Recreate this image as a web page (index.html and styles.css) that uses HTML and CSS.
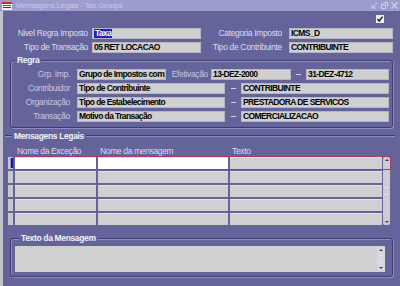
FILE: index.html
```html
<!DOCTYPE html>
<html>
  <head>
    <title>Mensagens Legais - Tax Groups</title>
    <link rel="stylesheet" href="styles.css">
  </head>

  <body>
    <div class="window">
      <div class="titlebar">
        <svg class="app-icon" width="10" height="8" viewBox="0 0 10 8">
          <rect x="0" y="0" width="10" height="8" fill="#f4f4f4"/>
          <rect x="0" y="0" width="10" height="2" fill="#c8302c"/>
          <rect x="1" y="3" width="8" height="1" fill="#c8302c"/>
          <rect x="1" y="5" width="8" height="1" fill="#404040"/>
        </svg>
        <span class="title">Mensagens Legais - Tax Groups</span>
        <div class="controls">
          <svg width="7" height="7" viewBox="0 0 7 7"><path d="M1 6 L6 1 M1 6 H5 M1 6 V3" stroke="#d2d2e6" fill="none"/></svg>
          <svg width="7" height="7" viewBox="0 0 7 7"><path d="M0.5 2.5 H4.5 V6.5 H0.5 Z M2.5 0.5 H6.5 V4.5" stroke="#d2d2e6" fill="none"/></svg>
          <svg width="7" height="7" viewBox="0 0 7 7"><path d="M0.5 0.5 L6.5 6.5 M6.5 0.5 L0.5 6.5" stroke="#d2d2e6" stroke-width="1.2"/></svg>
        </div>
      </div>

      <div class="content">
        <div class="check-row">
          <span class="check">
            <svg width="8" height="8" viewBox="0 0 8 8"><path d="M1.5 4 L3.2 6 L6.6 1.6" stroke="#202030" stroke-width="1.5" fill="none"/></svg>
          </span>
        </div>

        <div class="head">
          <span class="lbl">Nivel Regra Imposto</span>
          <span class="fld"><span class="sel">Taxa</span></span>
          <span class="lbl lbl-right">Categoria Imposto</span>
          <span class="fld">ICMS_D</span>
          <span class="lbl">Tipo de Transação</span>
          <span class="fld">05 RET LOCACAO</span>
          <span class="lbl lbl-right">Tipo de Contribuinte</span>
          <span class="fld">CONTRIBUINTE</span>
        </div>

        <fieldset class="group regra">
          <legend>Regra</legend>
          <div class="rrow">
            <span class="rlbl">Grp. Imp.</span>
            <span class="fld grp">Grupo de Impostos com</span>
            <span class="rlbl efet">Efetivação</span>
            <span class="fld date-from">13-DEZ-2000</span>
            <span class="dash"></span>
            <span class="fld date-to">31-DEZ-4712</span>
          </div>
          <div class="rrow">
            <span class="rlbl">Contribuidor</span>
            <span class="fld half">Tipo de Contribuinte</span>
            <span class="dash dash-wide"></span>
            <span class="fld half">CONTRIBUINTE</span>
          </div>
          <div class="rrow">
            <span class="rlbl">Organização</span>
            <span class="fld half">Tipo de Estabelecimento</span>
            <span class="dash dash-wide"></span>
            <span class="fld half">PRESTADORA DE SERVICOS</span>
          </div>
          <div class="rrow">
            <span class="rlbl">Transação</span>
            <span class="fld half">Motivo da Transação</span>
            <span class="dash dash-wide"></span>
            <span class="fld half">COMERCIALIZACAO</span>
          </div>
        </fieldset>

        <div class="sect-title"><span>Mensagens Legais</span></div>

        <div class="cols">
          <span></span>
          <span>Nome da Exceção</span>
          <span>Nome da mensagem</span>
          <span>Texto</span>
        </div>

        <div class="table">
          <div class="ind">
            <span class="ind-cell ind-current"><i></i></span>
            <span class="ind-cell"></span>
            <span class="ind-cell"></span>
            <span class="ind-cell"></span>
            <span class="ind-cell"></span>
          </div>
          <div class="rows">
            <div class="trow current-row"><span class="cell"></span><span class="cell"></span><span class="cell"></span></div>
            <div class="trow"><span class="cell"></span><span class="cell"></span><span class="cell"></span></div>
            <div class="trow"><span class="cell"></span><span class="cell"></span><span class="cell"></span></div>
            <div class="trow"><span class="cell"></span><span class="cell"></span><span class="cell"></span></div>
            <div class="trow"><span class="cell"></span><span class="cell"></span><span class="cell"></span></div>
          </div>
          <div class="vscroll">
            <span class="arrow up"></span>
            <span class="grip"></span>
            <span class="arrow down"></span>
          </div>
          <div class="current-box"></div>
        </div>

        <fieldset class="group texto">
          <legend>Texto da Mensagem</legend>
          <div class="textarea">
            <div class="vscroll vscroll-small">
              <span class="arrow up"></span>
              <span class="grip"></span>
              <span class="arrow down"></span>
            </div>
          </div>
        </fieldset>
      </div>
    </div>
  </body>
</html>
```

FILE: styles.css
```css
:root {
  --bg: #64649a;
  --field: #d0d0d0;
  --line-dark: #3c3c6c;
  --line-light: #8c8cc0;
  --font: "Liberation Sans", Arial, sans-serif;
}

body {
  margin: 0;
  background: var(--bg);
  font-family: var(--font);
  font-size: 8.5px;
  letter-spacing: -0.35px;
}

.window {
  width: 400px;
  height: 286px;
  overflow: hidden;
}

.titlebar {
  height: 11px;
  background: #9c9cce;
  display: flex;
  align-items: center;
  padding-left: 2px;
}
.app-icon {
  margin-right: 4px;
}
.title {
  color: #c8c8e6;
  font-size: 8px;
  letter-spacing: -0.3px;
  line-height: 11px;
}
.controls {
  margin-left: auto;
  display: flex;
  gap: 3px;
  padding-right: 2px;
}

.content {
  height: 275px;
  border-left: 3px solid #c2c2cc;
  display: flex;
  flex-direction: column;
}

.check-row {
  display: flex;
  justify-content: flex-end;
  padding: 4px 16px 0 0;
  margin-bottom: 5px;
}
.check {
  width: 8px;
  height: 8px;
  background: #f0f0f4;
  display: flex;
}

.head {
  display: grid;
  grid-template-columns: 89px 109px 88px 104px;
  grid-auto-rows: 11px;
  row-gap: 3px;
}
.lbl {
  color: #dcdcf0;
  text-align: right;
  padding-right: 4px;
  line-height: 11px;
  white-space: nowrap;
}
.lbl-right {
  padding-right: 7px;
}

.fld {
  box-sizing: border-box;
  height: 11px;
  background: var(--field);
  border: 1px solid #b4b4c2;
  color: #000;
  font-weight: bold;
  letter-spacing: -0.6px;
  line-height: 9px;
  padding-left: 1px;
  white-space: nowrap;
  overflow: hidden;
}
.sel {
  background: #2222b8;
  color: #fff;
  padding: 0 1px;
}

.group {
  margin: 2px 0 0 7px;
  width: 383px;
  box-sizing: border-box;
  border: 1px solid var(--line-dark);
  border-radius: 3px;
  box-shadow: 1px 1px 0 var(--line-light), inset 1px 1px 0 var(--line-light);
  padding: 0;
}
.group legend {
  color: #f2f2fc;
  font-weight: bold;
  line-height: 10px;
  padding: 0 2px;
  margin-left: 4px;
  background: var(--bg);
}

.regra {
  padding: 4px 0 5px 0;
  display: flex;
  flex-direction: column;
  gap: 3px;
}
.rrow {
  display: flex;
  height: 11px;
}
.rlbl {
  width: 66px;
  box-sizing: border-box;
  padding-right: 7px;
  text-align: right;
  color: #c6c6e2;
  line-height: 11px;
  white-space: nowrap;
}
.rlbl.efet {
  width: 45px;
  padding-right: 3px;
}
.grp { width: 89px; }
.date-from { width: 80px; }
.date-to { width: 83px; }
.half { width: 148px; }

.dash {
  width: 15px;
  display: flex;
  align-items: center;
  justify-content: center;
}
.dash::before {
  content: "";
  width: 5px;
  height: 1px;
  background: #d0d0ea;
}
.dash-wide {
  width: 16px;
}

.sect-title {
  display: flex;
  align-items: center;
  height: 10px;
  margin: 3px 5px 0 2px;
  color: #f2f2fc;
  font-weight: bold;
}
.sect-title::before,
.sect-title::after {
  content: "";
  height: 0;
  border-top: 1px solid var(--line-dark);
  border-bottom: 1px solid var(--line-light);
}
.sect-title::before {
  width: 7px;
}
.sect-title::after {
  flex: 1;
}
.sect-title span {
  padding: 0 2px;
}

.cols {
  display: grid;
  grid-template-columns: 7px 83px 132px 153px;
  margin: 5px 0 0 5px;
  height: 10px;
  color: #dcdcf0;
  line-height: 11px;
  overflow: hidden;
}
.cols span {
  padding-left: 2px;
  white-space: nowrap;
}

.table {
  position: relative;
  display: flex;
  margin-left: 5px;
  padding-top: 1px;
}
.ind {
  width: 5px;
  display: flex;
  flex-direction: column;
  gap: 2px;
  margin-right: 2px;
}
.ind-cell {
  height: 12px;
  background: #c8c8cc;
  display: flex;
  justify-content: flex-end;
}
.ind-current i {
  width: 3px;
  height: 10px;
  margin-top: 1px;
  background: #1818a8;
  box-shadow: inset 1px 0 0 #8a8ae0;
}
.rows {
  display: flex;
  flex-direction: column;
  gap: 2px;
}
.trow {
  display: grid;
  grid-template-columns: 81px 130px 152px;
  column-gap: 2px;
  height: 12px;
}
.cell {
  background: var(--field);
  box-shadow: inset 0 1px 0 #e2e2e6;
}
.current-row .cell:nth-child(-n+2) {
  background: #fff;
}

.vscroll {
  width: 7px;
  margin-left: 1px;
  background: #ccccd4;
  border-radius: 2px;
  display: flex;
  flex-direction: column;
  justify-content: space-between;
  align-items: center;
}
.arrow {
  width: 0;
  height: 0;
  border-left: 2px solid transparent;
  border-right: 2px solid transparent;
  margin: 2px 0;
}
.arrow.up {
  border-bottom: 2px solid #404058;
}
.arrow.down {
  border-top: 2px solid #404058;
}
.grip {
  width: 3px;
  height: 6px;
  border-top: 1px dotted #f4f4f8;
  border-bottom: 1px dotted #f4f4f8;
}

.current-box {
  position: absolute;
  left: 5px;
  top: 0;
  width: 378px;
  height: 14px;
  box-sizing: border-box;
  border: 1px solid #a43c68;
  border-radius: 1px;
  pointer-events: none;
}

.texto {
  margin-top: 8px;
  padding: 3px 0 4px 4px;
}
.textarea {
  width: 370px;
  height: 26px;
  background: var(--field);
  display: flex;
  justify-content: flex-end;
  align-items: center;
}
.vscroll-small {
  width: 8px;
  height: 24px;
  margin-right: 0;
  background: #d8d8de;
}
```
